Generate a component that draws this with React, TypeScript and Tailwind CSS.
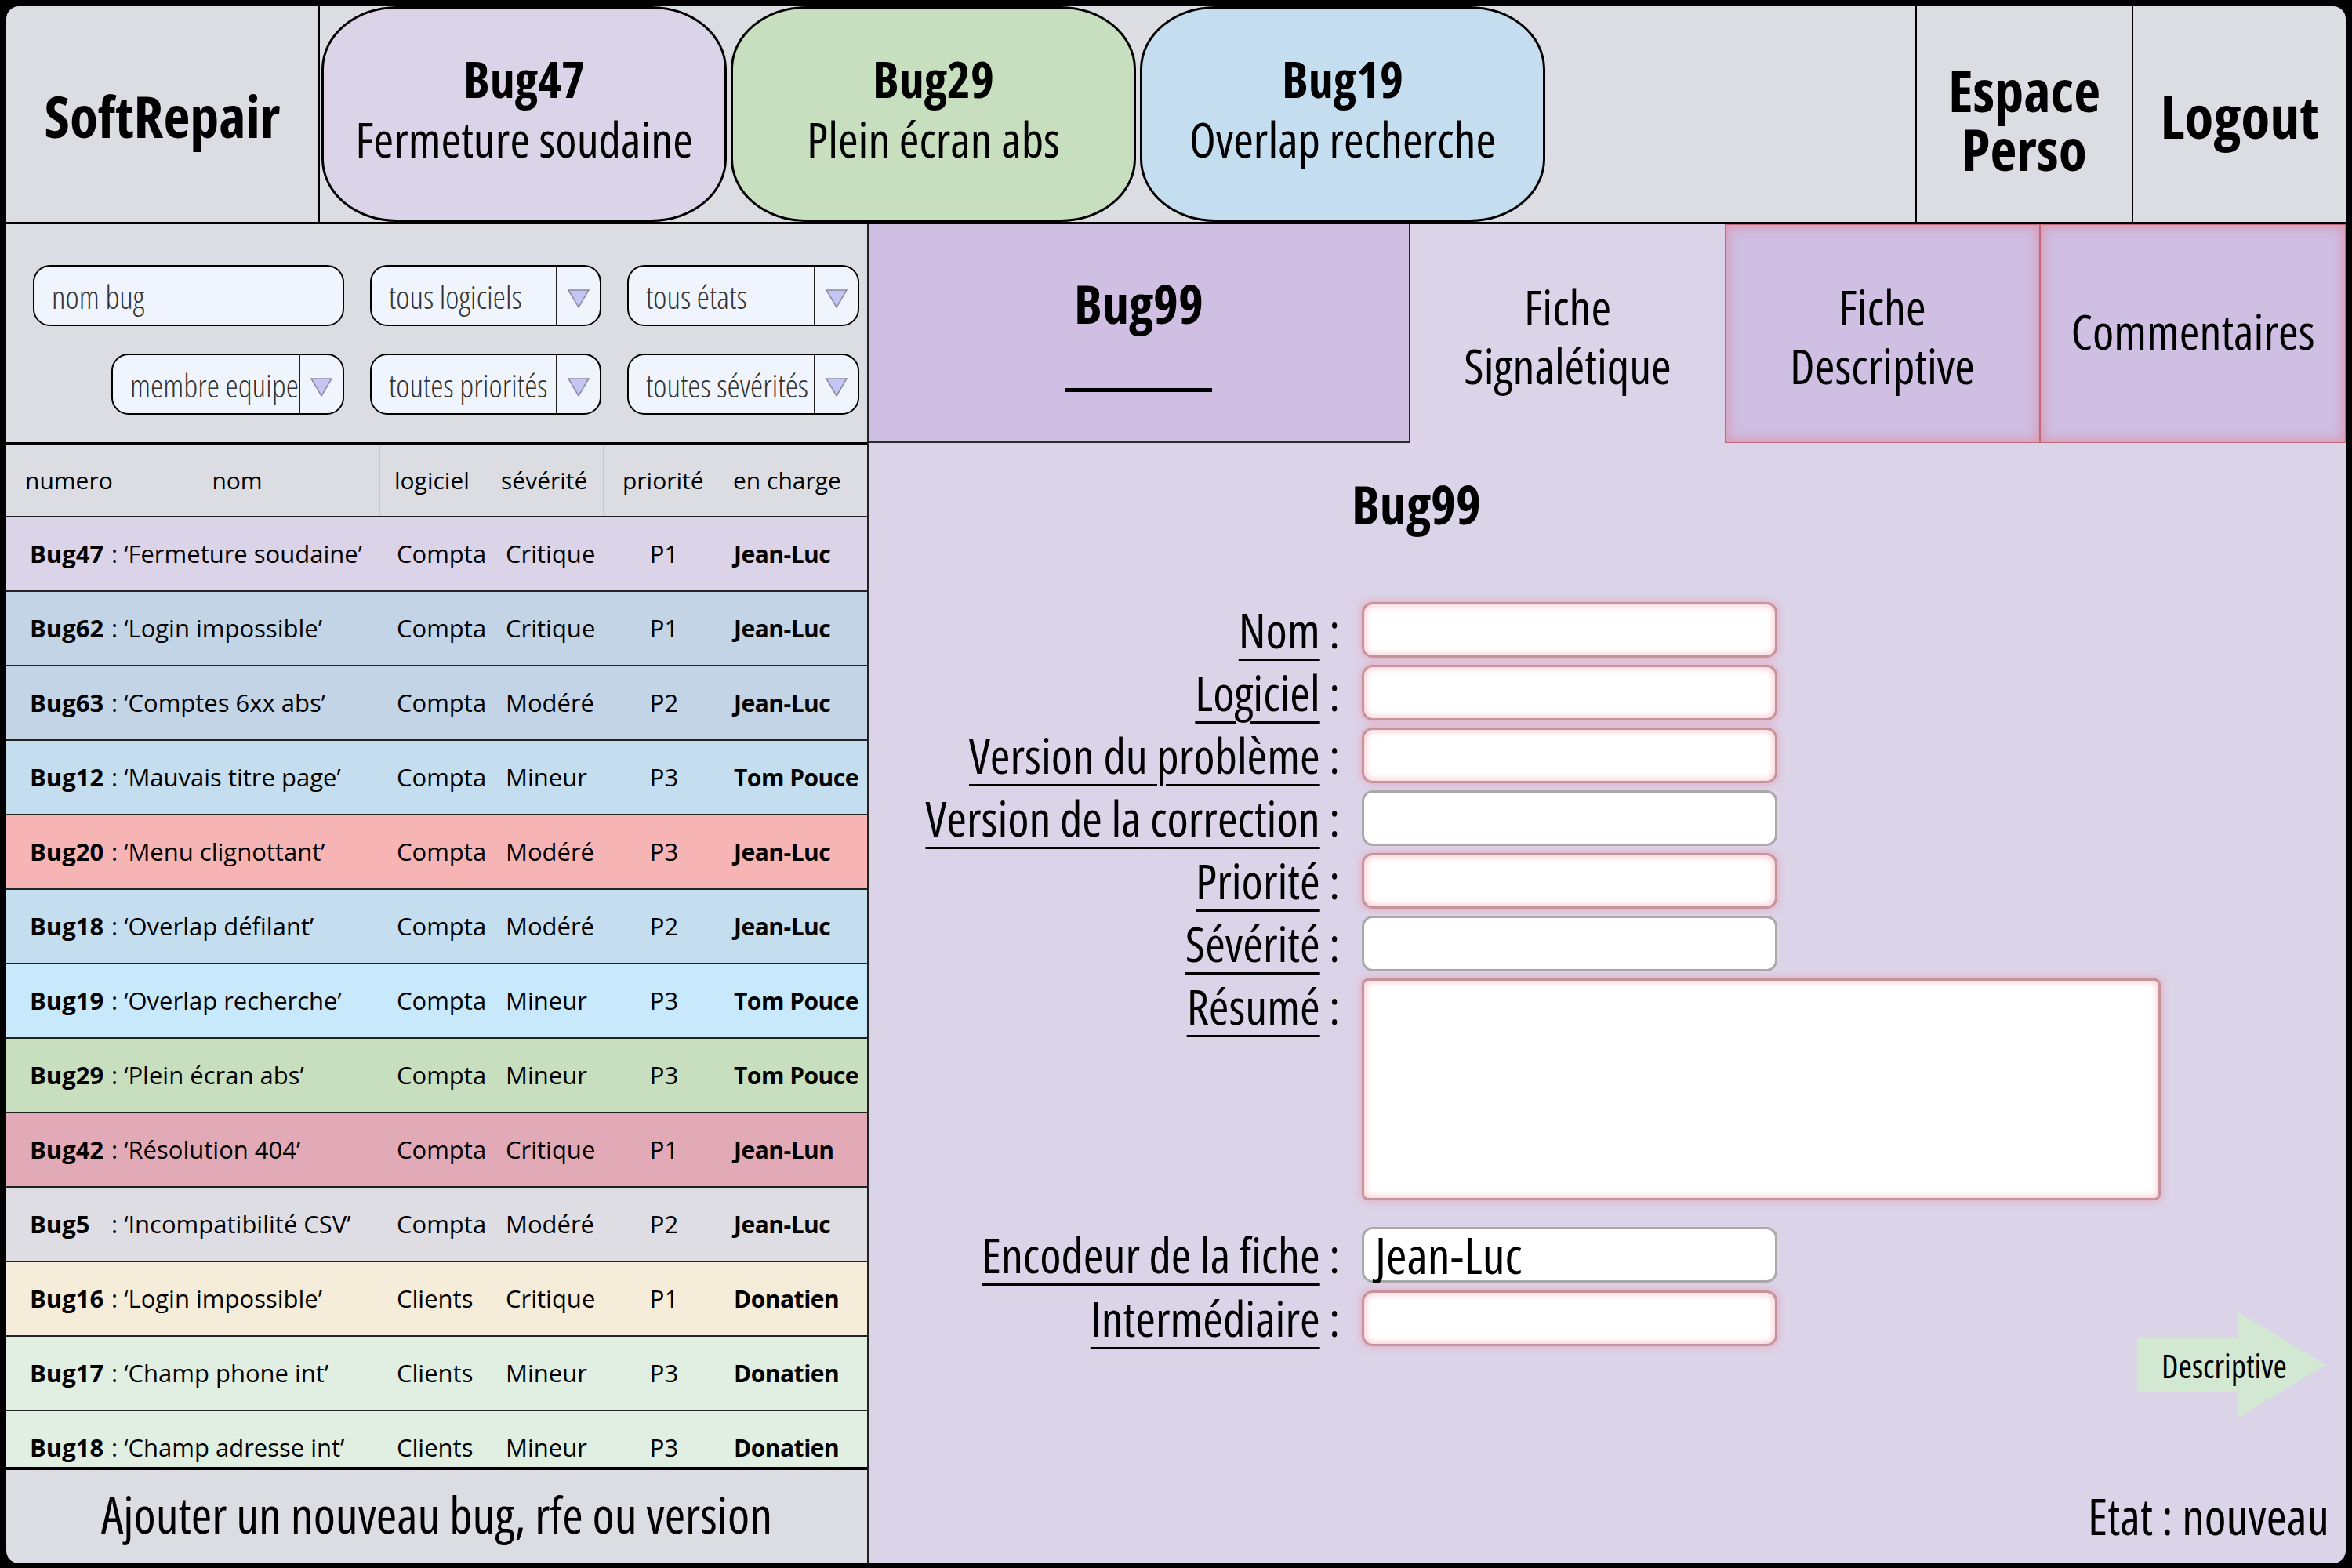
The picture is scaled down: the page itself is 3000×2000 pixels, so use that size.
import React from 'react';

const NARROW = "font-['Open_Sans',sans-serif] font-stretch-condensed";
const TABLE = "font-['Open_Sans',sans-serif] font-stretch-normal";

interface Bug {
    id: string;
    name: string;
    soft: string;
    sev: string;
    prio: string;
    who: string;
    bg: string;
}

const BUGS: Bug[] = [
    { id: 'Bug47', name: 'Fermeture soudaine', soft: 'Compta', sev: 'Critique', prio: 'P1', who: 'Jean-Luc', bg: 'bg-[#dbd3e7]' },
    { id: 'Bug62', name: 'Login impossible', soft: 'Compta', sev: 'Critique', prio: 'P1', who: 'Jean-Luc', bg: 'bg-[#c2d4e6]' },
    { id: 'Bug63', name: 'Comptes 6xx abs', soft: 'Compta', sev: 'Modéré', prio: 'P2', who: 'Jean-Luc', bg: 'bg-[#c2d4e6]' },
    { id: 'Bug12', name: 'Mauvais titre page', soft: 'Compta', sev: 'Mineur', prio: 'P3', who: 'Tom Pouce', bg: 'bg-[#c4def0]' },
    { id: 'Bug20', name: 'Menu clignottant', soft: 'Compta', sev: 'Modéré', prio: 'P3', who: 'Jean-Luc', bg: 'bg-[#f7b4b4]' },
    { id: 'Bug18', name: 'Overlap défilant', soft: 'Compta', sev: 'Modéré', prio: 'P2', who: 'Jean-Luc', bg: 'bg-[#c4def0]' },
    { id: 'Bug19', name: 'Overlap recherche', soft: 'Compta', sev: 'Mineur', prio: 'P3', who: 'Tom Pouce', bg: 'bg-[#c8e8fc]' },
    { id: 'Bug29', name: 'Plein écran abs', soft: 'Compta', sev: 'Mineur', prio: 'P3', who: 'Tom Pouce', bg: 'bg-[#c8dfbf]' },
    { id: 'Bug42', name: 'Résolution 404', soft: 'Compta', sev: 'Critique', prio: 'P1', who: 'Jean-Lun', bg: 'bg-[#e2aab6]' },
    { id: 'Bug5', name: 'Incompatibilité CSV', soft: 'Compta', sev: 'Modéré', prio: 'P2', who: 'Jean-Luc', bg: 'bg-[#dddde3]' },
    { id: 'Bug16', name: 'Login impossible', soft: 'Clients', sev: 'Critique', prio: 'P1', who: 'Donatien', bg: 'bg-[#f5ecd9]' },
    { id: 'Bug17', name: 'Champ phone int', soft: 'Clients', sev: 'Mineur', prio: 'P3', who: 'Donatien', bg: 'bg-[#e1efe3]' },
    { id: 'Bug18', name: 'Champ adresse int', soft: 'Clients', sev: 'Mineur', prio: 'P3', who: 'Donatien', bg: 'bg-[#e1efe3]' }
];

const PINK = 'border-[#c4949c] shadow-[0_0_8px_2px_rgba(240,150,170,0.55),inset_0_0_8px_2px_rgba(245,170,185,0.6)]';
const GRAY = 'border-[#a9a9a9]';

function OpenTab({ id, title, bg }: { id: string; title: string; bg: string }) {
    return (
        <div className={`flex w-[517px] flex-col items-center justify-center rounded-[96px/80px] border-[3px] border-black pb-[14px] ${bg}`}>
            <div className="text-[64px] font-bold leading-[77px]">{id}</div>
            <div className="text-[62px] leading-[77px]">{title}</div>
        </div>
    );
}

function Filter({ label, width, select }: { label: string; width: string; select?: boolean }) {
    return (
        <div className={`flex h-[78px] items-stretch rounded-[22px] border-2 border-black bg-[#f0f5fd] ${width}`}>
            <div className="flex flex-1 items-center overflow-hidden whitespace-nowrap pl-[22px] pt-[4px] text-[41px] font-light text-[#333]">
                {label}
            </div>
            {select && (
                <div className="flex w-[56px] items-center justify-center border-l-2 border-[#222] pt-[8px]">
                    <svg width="30" height="26" viewBox="0 0 30 26">
                        <path d="M2 2 H28 L15 24 Z" fill="#c3c6f5" stroke="#8a8aa0" strokeWidth="1.5" />
                    </svg>
                </div>
            )}
        </div>
    );
}

function Label({ text }: { text: string }) {
    return (
        <div className="h-[71px] w-[601px] whitespace-nowrap text-right text-[62px] leading-[71px]">
            <span className="underline decoration-[3px] underline-offset-[13px]">{text}</span>
            <span> :</span>
        </div>
    );
}

function Field({ label, pink, value }: { label: string; pink: boolean; value?: string }) {
    return (
        <div className="flex h-[71px] items-center">
            <Label text={label} />
            <div
                className={`ml-[28px] flex h-[71px] w-[530px] items-center rounded-[14px] border-[3px] bg-white pl-[14px] text-[64px] ${pink ? PINK : GRAY}`}
            >
                {value}
            </div>
        </div>
    );
}

export default function App() {
    return (
        <div className={`h-[2000px] w-[3000px] bg-black pb-[6px] pl-[8px] pr-[8px] pt-[8px] text-black ${NARROW}`}>
            <div className="flex h-full flex-col overflow-hidden rounded-[16px]">
                {/* Header */}
                <div className="flex h-[278px] shrink-0 border-b-[3px] border-black bg-[#dcdde2]">
                    <div className="flex w-[400px] items-center justify-center border-r-2 border-black pt-[4px] text-[74px] font-bold">
                        SoftRepair
                    </div>
                    <div className="ml-[2px] flex gap-[5px]">
                        <OpenTab id="Bug47" title="Fermeture soudaine" bg="bg-[#dbd3e7]" />
                        <OpenTab id="Bug29" title="Plein écran abs" bg="bg-[#c8dfbf]" />
                        <OpenTab id="Bug19" title="Overlap recherche" bg="bg-[#c4def0]" />
                    </div>
                    <div className="flex-1" />
                    <div className="flex w-[276px] flex-col items-center justify-center border-l-2 border-black pt-[12px] text-[74px] font-bold leading-[75px]">
                        <div>Espace</div>
                        <div>Perso</div>
                    </div>
                    <div className="flex w-[273px] items-center justify-center border-l-2 border-black pt-[4px] text-[76px] font-bold">
                        Logout
                    </div>
                </div>

                <div className="flex min-h-0 flex-1">
                    {/* Left: bug list */}
                    <div className="flex w-[1100px] shrink-0 flex-col border-r-2 border-[#222]">
                        <div className="flex h-[281px] shrink-0 flex-col gap-[35px] border-b-[3px] border-black bg-[#dcdde2] pr-[10px] pt-[52px]">
                            <div className="flex justify-end gap-[33px]">
                                <Filter label="nom bug" width="w-[397px]" />
                                <Filter label="tous logiciels" width="w-[295px]" select />
                                <Filter label="tous états" width="w-[296px]" select />
                            </div>
                            <div className="flex justify-end gap-[33px]">
                                <Filter label="membre equipe" width="w-[297px]" select />
                                <Filter label="toutes priorités" width="w-[295px]" select />
                                <Filter label="toutes sévérités" width="w-[296px]" select />
                            </div>
                        </div>

                        <div className={`flex h-[93px] shrink-0 border-b-2 border-[#222] bg-[#dcdde2] text-[30px] ${TABLE}`}>
                            <div className="flex w-[143px] items-center border-r border-[#c6c6cc] pl-[24px]">numero</div>
                            <div className="flex w-[334px] items-center justify-center border-r border-[#c6c6cc] pr-[30px]">nom</div>
                            <div className="flex w-[134px] items-center border-r border-[#c6c6cc] pl-[18px]">logiciel</div>
                            <div className="flex w-[151px] items-center border-r border-[#c6c6cc] pl-[20px]">sévérité</div>
                            <div className="flex w-[145px] items-center border-r border-[#c6c6cc] pl-[24px]">priorité</div>
                            <div className="flex flex-1 items-center pl-[20px]">en charge</div>
                        </div>

                        <div className={`min-h-0 flex-1 overflow-hidden text-[31px] ${TABLE}`}>
                            {BUGS.map((b, i) => (
                                <div key={i} className={`flex h-[95px] items-center whitespace-nowrap border-b-2 border-[#222] ${b.bg}`}>
                                    <div className="flex w-[498px] pl-[30px]">
                                        <span className="w-[104px] font-bold">{b.id}</span>
                                        <span>:&nbsp;‘{b.name}’</span>
                                    </div>
                                    <div className="w-[139px]">{b.soft}</div>
                                    <div className="w-[141px]">{b.sev}</div>
                                    <div className="w-[122px] text-center">{b.prio}</div>
                                    <div className="flex-1 pl-[28px] text-[30px] font-bold tracking-[-0.5px]">{b.who}</div>
                                </div>
                            ))}
                        </div>

                        <div className="flex h-[123px] shrink-0 items-center justify-center border-t-[4px] border-black bg-[#dcdde2] pb-[6px] text-[64px]">
                            Ajouter un nouveau bug, rfe ou version
                        </div>
                    </div>

                    {/* Right: bug form */}
                    <div className="flex min-w-0 flex-1 flex-col bg-[#dbd3e8]">
                        <div className="flex h-[279px] shrink-0">
                            <div className="flex w-[691px] flex-col items-center justify-center border-b-2 border-r-2 border-[#2a2a2a] bg-[#cebfe3]">
                                <div className="text-[68px] font-bold leading-[76px]">Bug99</div>
                                <div className="mt-[70px] h-[5px] w-[187px] bg-black" />
                            </div>
                            <div className="flex w-[401px] flex-col items-center justify-center pt-[6px] text-[62px] leading-[75px]">
                                <div>Fiche</div>
                                <div>Signalétique</div>
                            </div>
                            <div className="flex w-[402px] flex-col items-center justify-center border border-[#c06878] bg-[#cebfe3] pt-[6px] text-[62px] leading-[75px] shadow-[inset_0_0_14px_4px_rgba(232,120,140,0.5)]">
                                <div>Fiche</div>
                                <div>Descriptive</div>
                            </div>
                            <div className="flex flex-1 items-center justify-center border border-[#c06878] bg-[#cebfe3] pb-[6px] text-[62px] shadow-[inset_0_0_14px_4px_rgba(232,120,140,0.5)]">
                                Commentaires
                            </div>
                        </div>

                        <div className="flex min-h-0 flex-1 flex-col">
                            <div className="ml-[616px] mt-[44px] text-[68px] font-bold leading-[68px]">Bug99</div>

                            <div className="mt-[91px] flex flex-col gap-[9px]">
                                <Field label="Nom" pink />
                                <Field label="Logiciel" pink />
                                <Field label="Version du problème" pink />
                                <Field label="Version de la correction" pink={false} />
                                <Field label="Priorité" pink />
                                <Field label="Sévérité" pink={false} />
                                <div className="flex items-start">
                                    <Label text="Résumé" />
                                    <div className={`ml-[28px] h-[283px] w-[1019px] rounded-[8px] border-[3px] bg-white ${PINK}`} />
                                </div>
                            </div>

                            <div className="mt-[34px]">
                                <Field label="Encodeur de la fiche" pink={false} value="Jean-Luc" />
                            </div>
                            <div className="mt-[10px] flex items-start">
                                <Field label="Intermédiaire" pink />
                                <div className="flex-1" />
                                <div className="relative mr-[26px] mt-[27px] h-[136px] w-[240px]">
                                    <svg width="240" height="136" viewBox="0 0 240 136">
                                        <path d="M0 34 H128 V0 L240 68 L128 136 V102 H0 Z" fill="#d2e8d3" />
                                    </svg>
                                    <div className="absolute left-0 top-0 flex h-full w-[222px] items-center justify-center text-[42px]">
                                        Descriptive
                                    </div>
                                </div>
                            </div>

                            <div className="mt-auto self-end pb-[29px] pr-[21px] text-[63px] leading-[63px]">Etat : nouveau</div>
                        </div>
                    </div>
                </div>
            </div>
        </div>
    );
}
